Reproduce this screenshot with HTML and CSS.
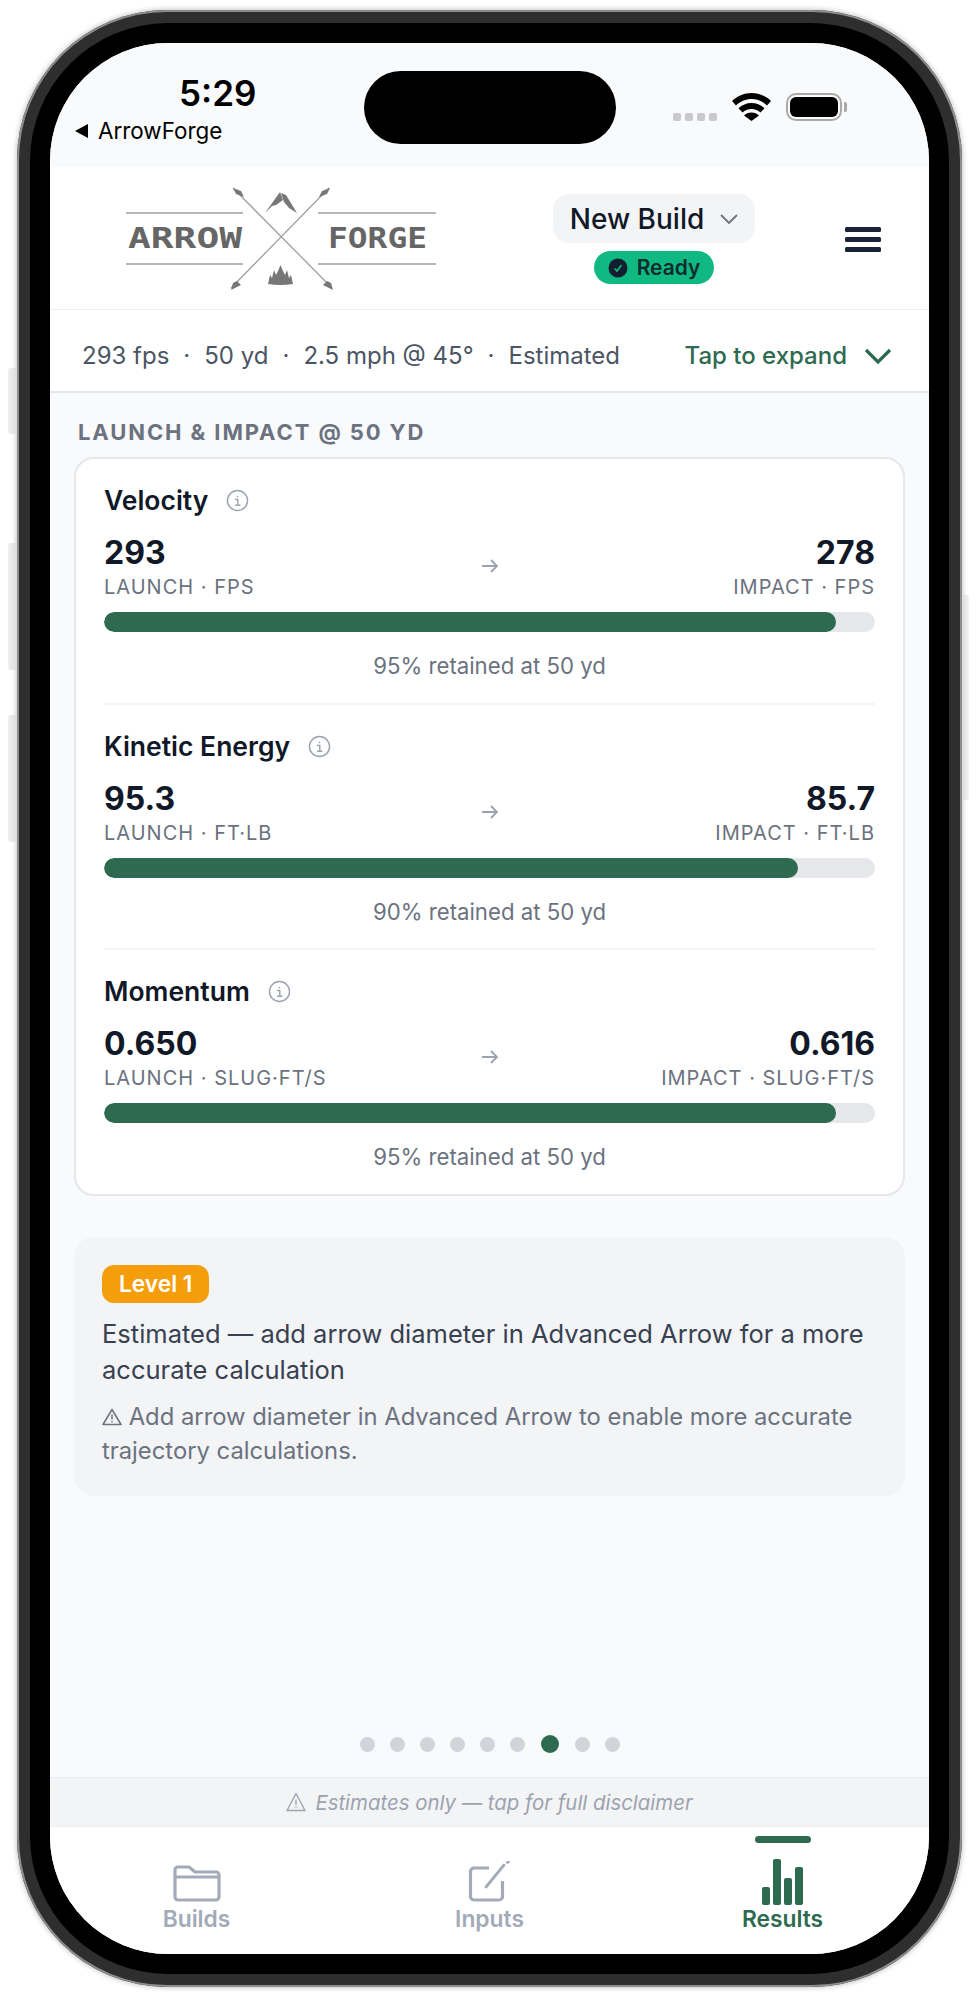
FILE: index.html
```html
<!DOCTYPE html>
<html lang="en">
<head>
<meta charset="utf-8">
<title>ArrowForge</title>
<link rel="stylesheet" href="styles.css">
</head>
<body>
<div class="phone">
  <span class="side-btn btn-a"></span>
  <span class="side-btn btn-b"></span>
  <span class="side-btn btn-c"></span>
  <span class="side-btn btn-d"></span>
  <div class="bezel">
    <div class="screen">
      <div class="island"></div>
      <div class="status">
        <div class="status-left">
          <div class="clock">5:29</div>
          <div class="back"><span class="back-tri"></span>ArrowForge</div>
        </div>
        <div class="status-right">
          <div class="signal"><i></i><i></i><i></i><i></i></div>
          <svg class="wifi" viewBox="0 0 39 28" width="39" height="28"><path d="M19.500 0C27 0 33.800 3 39 8l-4 4.500C30.800 8.500 25.500 6 19.500 6S8.200 8.500 4 12.500L0 8C5.200 3 12 0 19.500 0z" fill="#000"/><path d="M19.500 10c5 0 9.500 2 13 5.200l-4 4.300c-2.400-2.200-5.500-3.500-9-3.500s-6.600 1.300-9 3.500l-4-4.300C10 12 14.500 10 19.500 10z" fill="#000"/><path d="M12 22.500c2-1.800 4.600-2.900 7.500-2.900s5.500 1.100 7.500 2.900L19.500 28z" fill="#000"/></svg>
          <div class="battery"><div class="battery-fill"></div></div>
        </div>
      </div>

      <header class="header">
        <svg class="logo" viewBox="0 0 320 112" width="320" height="112" role="img" aria-label="Arrow Forge">
          <g stroke="#a0a0a0" stroke-width="1.500" fill="none">
            <path d="M0 35h117M192 35h118M0 86h117M192 86h118"/>
            <path d="M107 10L206 110M203 10L105 110" stroke="#a0a0a0" stroke-width="1.300"/>
          </g>
          <g fill="#777">
            <path d="M107 10l8 3 3 6-8-3z"/>
            <path d="M204 10l-8 3-3 6 8-3z"/>
            <path d="M105 112l2-7 4-2 4 4-4 2z"/>
            <path d="M207 112l-2-7-4-2-4 4 4 2z"/>
            <path d="M139 35L154 14l3 8-7 5-4 1z"/>
            <path d="M155 15l5 2 11 18-8-5-5-6z"/>
            <path d="M142 106l2-9 2 3 2-8 2 5 2-4 2.500-6 2.500 6 2 4 2-5 2 8 2-3 2 9q-12 2-25 0z"/>
          </g>
          <text x="2" y="70" class="logo-text" textLength="114" lengthAdjust="spacingAndGlyphs">ARROW</text>
          <text x="202" y="70" class="logo-text" textLength="99" lengthAdjust="spacingAndGlyphs">FORGE</text>
        </svg>
        <div class="build">
          <div class="build-pill">New Build
            <svg viewBox="0 0 18 10" width="18" height="10"><path d="M1 1l8 8 8-8" fill="none" stroke="#6b7280" stroke-width="1.800"/></svg>
          </div>
          <div class="ready">
            <svg viewBox="0 0 20 20" width="20" height="20"><circle cx="10" cy="10" r="9.500" fill="#111f2e"/><path d="M6.500 10.500l2.500 2.500 4.500-6" fill="none" stroke="#10b981" stroke-width="1.600"/></svg>
            Ready
          </div>
        </div>
        <div class="burger"><i></i><i></i><i></i></div>
      </header>

      <div class="summary">
        <div class="summary-text">293 fps<b>·</b>50 yd<b>·</b>2.5 mph @ 45°<b>·</b>Estimated</div>
        <div class="expand">Tap to expand
          <svg viewBox="0 0 28 16" width="28" height="16"><path d="M2 2l12 12L26 2" fill="none" stroke="#2d6a4f" stroke-width="3.200"/></svg>
        </div>
      </div>

      <main class="content">
        <h2 class="section-title">LAUNCH &amp; IMPACT @ 50 YD</h2>
        <section class="card">
          <article class="metric">
            <div class="metric-head">Velocity
              <svg class="info" viewBox="0 0 24 24" width="23" height="23"><circle cx="12" cy="12" r="10.500"/><path d="M12 7v1.600M9.500 11H12.300V17M9.500 17h5.500"/></svg>
            </div>
            <div class="values">
              <div class="val"><strong>293</strong><span>LAUNCH · FPS</span></div>
              <svg class="arrow" viewBox="0 0 18 16" width="18" height="16"><path d="M1 8h15M10 2l6 6-6 6"/></svg>
              <div class="val right"><strong>278</strong><span>IMPACT · FPS</span></div>
            </div>
            <div class="track"><div class="fill" style="width:95%"></div></div>
            <p class="retained">95% retained at 50 yd</p>
          </article>
          <article class="metric">
            <div class="metric-head">Kinetic Energy
              <svg class="info" viewBox="0 0 24 24" width="23" height="23"><circle cx="12" cy="12" r="10.500"/><path d="M12 7v1.600M9.500 11H12.300V17M9.500 17h5.500"/></svg>
            </div>
            <div class="values">
              <div class="val"><strong>95.3</strong><span>LAUNCH · FT·LB</span></div>
              <svg class="arrow" viewBox="0 0 18 16" width="18" height="16"><path d="M1 8h15M10 2l6 6-6 6"/></svg>
              <div class="val right"><strong>85.7</strong><span>IMPACT · FT·LB</span></div>
            </div>
            <div class="track"><div class="fill" style="width:90%"></div></div>
            <p class="retained">90% retained at 50 yd</p>
          </article>
          <article class="metric">
            <div class="metric-head">Momentum
              <svg class="info" viewBox="0 0 24 24" width="23" height="23"><circle cx="12" cy="12" r="10.500"/><path d="M12 7v1.600M9.500 11H12.300V17M9.500 17h5.500"/></svg>
            </div>
            <div class="values">
              <div class="val"><strong>0.650</strong><span>LAUNCH · SLUG·FT/S</span></div>
              <svg class="arrow" viewBox="0 0 18 16" width="18" height="16"><path d="M1 8h15M10 2l6 6-6 6"/></svg>
              <div class="val right"><strong>0.616</strong><span>IMPACT · SLUG·FT/S</span></div>
            </div>
            <div class="track"><div class="fill" style="width:95%"></div></div>
            <p class="retained">95% retained at 50 yd</p>
          </article>
        </section>

        <section class="note">
          <span class="level">Level 1</span>
          <p class="note-main">Estimated — add arrow diameter in Advanced Arrow for a more accurate calculation</p>
          <p class="note-sub"><svg viewBox="0 0 20 18" width="20" height="18"><path d="M10 1.500L19 16.500H1z" fill="none" stroke="#6b7280" stroke-width="1.500" stroke-linejoin="round"/><path d="M10 6.500v5M10 13v1.300" stroke="#6b7280" stroke-width="1.500"/></svg> Add arrow diameter in Advanced Arrow to enable more accurate trajectory calculations.</p>
        </section>

        <div class="dots">
          <i></i><i></i><i></i><i></i><i></i><i></i><i class="on"></i><i></i><i></i>
        </div>
      </main>

      <div class="disclaimer"><svg viewBox="0 0 20 20" width="20" height="20"><path d="M10 1.500L19 18.500H1z" fill="none" stroke="#9ca3af" stroke-width="1.300" stroke-linejoin="round"/><path d="M10 7.500v5.500M10 14.500v1.300" stroke="#9ca3af" stroke-width="1.300"/></svg> Estimates only — tap for full disclaimer</div>

      <nav class="tabs">
        <div class="tab">
          <svg viewBox="0 0 48 38" width="48" height="38"><path d="M2 32V5a3 3 0 0 1 3-3h11l6 5h21a3 3 0 0 1 3 3v22a3 3 0 0 1-3 3H5a3 3 0 0 1-3-3zM2 12h44" fill="none" stroke="#a3aab8" stroke-width="3.200"/></svg>
          <span>Builds</span>
        </div>
        <div class="tab">
          <svg viewBox="0 0 44 42" width="44" height="42"><path d="M21 7H6a3.500 3.500 0 0 0-3.500 3.500v25A3.500 3.500 0 0 0 6 39h25a3.500 3.500 0 0 0 3.500-3.500V20" fill="none" stroke="#a3aab8" stroke-width="3.200"/><path d="M18 26L36 4" fill="none" stroke="#a3aab8" stroke-width="2.800" stroke-linecap="round"/><path d="M39.500 1.500L40.500 .5" stroke="#a3aab8" stroke-width="2.800" stroke-linecap="round"/></svg>
          <span>Inputs</span>
        </div>
        <div class="tab active">
          <span class="tab-indicator"></span>
          <svg viewBox="0 0 41 46" width="41" height="46"><rect x="0" y="28" width="8" height="18" rx="2"/><rect x="11" y="0" width="8" height="46" rx="2"/><rect x="22" y="19" width="8" height="27" rx="2"/><rect x="33" y="8" width="8" height="38" rx="2"/></svg>
          <span>Results</span>
        </div>
      </nav>
    </div>
  </div>
</div>
</body>
</html>
```

FILE: styles.css
```css
* { box-sizing: border-box; }
html, body { margin: 0; padding: 0; background: #fff; }
body { width: 978px; height: 1998px; overflow: hidden; font-family: Inter, "Liberation Sans", sans-serif; }

.phone {
  position: relative;
  width: 945px;
  height: 1977px;
  margin: 10px 0 0 17px;
  border-radius: 150px;
  padding: 13px;
  background: #2e2e2e;
  box-shadow: inset 0 0 0 2px #8d8d8d, 0 0 5px 1px rgba(0,0,0,.22);
}
.side-btn {
  position: absolute;
  left: -9px;
  width: 9px;
  background: linear-gradient(90deg, #f0f0f0, #dcdcdc);
  border-radius: 3px 0 0 3px;
}
.btn-a { top: 358px; height: 66px; }
.btn-b { top: 533px; height: 127px; }
.btn-c { top: 705px; height: 127px; }
.btn-d { left: auto; right: -7px; width: 7px; top: 585px; height: 205px; border-radius: 0 3px 3px 0; background: linear-gradient(90deg, #dcdcdc, #f2f2f2); }

.bezel { width: 919px; height: 1951px; padding: 20px; background: #000; border-radius: 138px; }
.screen {
  position: relative;
  width: 879px;
  height: 1911px;
  display: flex;
  flex-direction: column;
  overflow: hidden;
  border-radius: 118px;
  background: #f9fafb;
}
.island { position: absolute; left: 314px; top: 28px; width: 252px; height: 73px; border-radius: 37px; background: #000; }

.status { height: 124px; flex: none; display: flex; justify-content: space-between; padding: 32px 87px 0 25px; background: #f9fafb; }
.clock { font: 600 35px/36px Inter, sans-serif; color: #000; margin-left: 104px; }
.back { display: flex; align-items: center; font-size: 22.400px; line-height: 26px; color: #000; margin-top: 7px; }
.back-tri { width: 0; height: 0; border: 7px solid transparent; border-right: 13px solid #000; border-left: 0; margin-right: 10px; }
.status-right { display: flex; align-items: flex-start; padding-top: 18px; }
.signal { display: flex; gap: 4px; margin: 20px 15px 0 0; }
.signal i { width: 8px; height: 8px; border-radius: 2px; background: #c9c9cc; }
.wifi { margin-right: 15px; }
.battery { position: relative; width: 56px; height: 28px; border: 2px solid #a9a9a9; border-radius: 10px; padding: 2px; }
.battery::after { content: ""; position: absolute; right: -7px; top: 7px; width: 3px; height: 10px; border-radius: 0 2px 2px 0; background: #a9a9a9; }
.battery-fill { width: 100%; height: 100%; border-radius: 6px; background: #000; }

.header {
  height: 143px;
  flex: none;
  display: flex;
  align-items: flex-start;
  background: #fff;
  border-bottom: 1.500px solid #eceef1;
  padding: 11px 0 0 76px;
}
.logo { flex: none; display: block; }
.logo-text { font-family: "DejaVu Sans Mono", monospace; font-weight: 700; font-size: 27.500px; fill: #666; }
.build { display: flex; flex-direction: column; align-items: center; margin: 16px 0 0 107px; }
.build-pill {
  width: 202px;
  height: 49px;
  display: flex;
  align-items: center;
  justify-content: center;
  gap: 16px;
  background: #f3f4f6;
  border-radius: 16px;
  font-size: 28px;
  font-weight: 500;
  color: #111827;
}
.ready {
  margin-top: 8px;
  width: 120px;
  height: 33px;
  display: flex;
  align-items: center;
  justify-content: center;
  gap: 9px;
  background: #10b981;
  border-radius: 17px;
  font-size: 21px;
  font-weight: 600;
  color: #0f2b2d;
}
.burger { display: flex; flex-direction: column; gap: 5px; width: 36px; margin: 49px 0 0 90px; }
.burger i { height: 5px; border-radius: 1.500px; background: #1a2238; }

.summary {
  height: 83px;
  flex: none;
  display: flex;
  align-items: center;
  justify-content: space-between;
  padding: 10px 37px 0 32px;
  background: #fff;
  border-bottom: 2px solid #e5e7eb;
  font-size: 24px;
}
.summary-text { color: #4b5563; white-space: nowrap; }
.summary-text b { font-weight: 400; margin: 0 14px; }
.expand { display: flex; align-items: center; gap: 17px; color: #2d6a4f; font-weight: 500; white-space: nowrap; }

.content { flex: 1; min-height: 0; display: flex; flex-direction: column; padding: 0 24px; }
.section-title { margin: 27px 0 13px 4px; font-size: 22px; line-height: 24px; font-weight: 700; letter-spacing: 1.900px; color: #6b7280; }

.card { background: #fff; border: 2px solid #e5e7eb; border-radius: 20px; padding: 0 28px; }
.metric { height: 245px; padding-top: 24px; border-bottom: 2px solid #f3f4f6; }
.metric:first-child { height: 246px; }
.metric:last-child { height: 244px; border-bottom: 0; }
.metric-head { display: flex; align-items: center; gap: 18px; font-size: 26.500px; line-height: 34px; font-weight: 600; color: #111827; }
.info { fill: none; stroke: #9ca3af; stroke-width: 1.500; }
.values { display: flex; align-items: center; justify-content: space-between; margin-top: 17px; }
.val { width: 300px; display: flex; flex-direction: column; }
.val strong { font-size: 32px; line-height: 38px; font-weight: 700; color: #111827; }
.val span { margin-top: 4px; font-size: 20px; line-height: 22px; letter-spacing: 1px; color: #6b7280; white-space: nowrap; }
.val.right { text-align: right; }
.arrow { fill: none; stroke: #9ca3af; stroke-width: 1.800; }
.track { height: 20px; margin-top: 14px; border-radius: 10px; background: #e5e7eb; overflow: hidden; }
.fill { height: 100%; border-radius: 10px; background: #2d6a4f; }
.retained { margin: 21px 0 0; text-align: center; font-size: 22.200px; line-height: 26px; color: #6b7280; }

.note { margin-top: 41px; padding: 28px 28px 0; height: 259px; border-radius: 20px; background: #f3f4f6; }
.level { display: block; width: fit-content; height: 38px; padding: 0 17px; background: #f59e0b; border-radius: 12px; color: #fff; font-size: 22.700px; font-weight: 600; line-height: 38px; }
.note-main { margin: 13px 0 0; font-size: 25.500px; line-height: 35.500px; color: #374151; }
.note-sub { margin: 13px 0 0; font-size: 23.800px; line-height: 34px; color: #6b7280; }
.note-sub svg { vertical-align: -1px; }

.dots { display: flex; align-items: center; justify-content: center; gap: 15px; margin-top: auto; margin-bottom: 24px; height: 18px; }
.dots i { width: 15px; height: 15px; border-radius: 50%; background: #d1d5db; }
.dots i.on { width: 18px; height: 18px; margin: 0 1px; background: #2d6a4f; }

.disclaimer {
  height: 50px;
  flex: none;
  display: flex;
  align-items: center;
  justify-content: center;
  gap: 9px;
  background: #f3f4f6;
  border-top: 1px solid #eceef1;
  border-bottom: 1px solid #eceef1;
  font-size: 20.400px;
  font-style: italic;
  color: #9ca3af;
}

.tabs { height: 127px; flex: none; display: grid; grid-template-columns: repeat(3, 1fr); background: #fff; }
.tab { position: relative; display: flex; flex-direction: column; align-items: center; justify-content: flex-end; height: 106px; gap: 2px; color: #a3aab8; font-size: 22.800px; font-weight: 600; }
.tab span:last-child { line-height: 28px; }
.tab.active { color: #2d6a4f; gap: 0; }
.tab.active svg { fill: #2d6a4f; }
.tab-indicator { position: absolute; top: 9px; left: 50%; width: 56px; height: 7px; margin-left: -28px; border-radius: 3.500px; background: #2d6a4f; }
```
